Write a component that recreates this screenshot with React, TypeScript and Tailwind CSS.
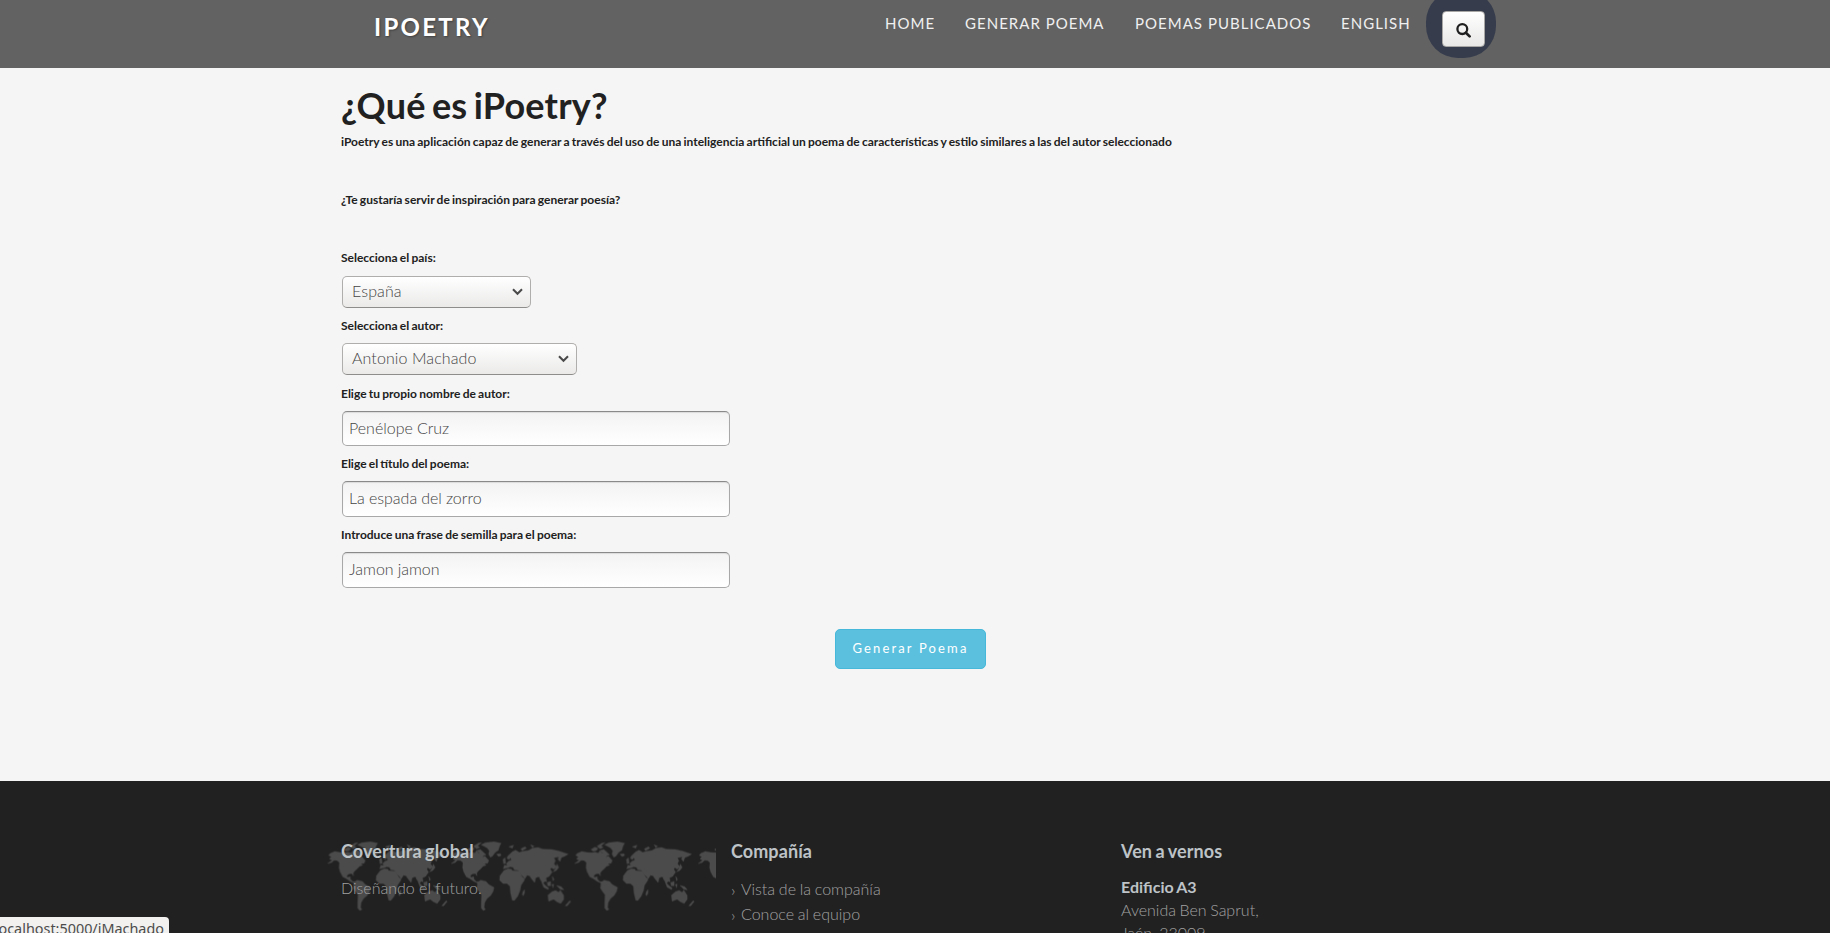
import React from "react";

const navItems = [
  { label: "HOME", width: "w-[80px]" },
  { label: "GENERAR POEMA", width: "w-[170px]" },
  { label: "POEMAS PUBLICADOS", width: "w-[206px]" },
  { label: "ENGLISH", width: "w-[85px]" },
];

function Header() {
  return (
    <header className="flex h-[68px] items-start overflow-hidden bg-[#626262]">
      <a className="ml-[374px] mt-[12px] w-[511px] text-[24px] font-bold leading-[30px] tracking-[2.3px] text-white [text-shadow:1px_1px_2px_rgba(0,0,0,0.35)]">
        IPOETRY
      </a>
      <nav className="flex pt-[13px] text-[15px] leading-[20px] tracking-[1.02px] text-[#f0f0f0]">
        {navItems.map((item) => (
          <a key={item.label} className={`${item.width} whitespace-nowrap`}>
            {item.label}
          </a>
        ))}
      </nav>
      <div className="-mt-[10px] flex h-[68px] w-[70px] items-center justify-center rounded-[32px] bg-[#363c4c] pl-[4px] pt-[10px]">
        <button className="flex h-[36px] w-[43px] items-center justify-center rounded-[4px] border border-[#a9a7a5] bg-linear-to-b from-white to-[#e9e8e7]">
          <svg viewBox="0 0 15 15" className="mt-[2px] h-[15px] w-[15px]" fill="none" stroke="#202020">
            <circle cx="6.3" cy="6.1" r="4.9" strokeWidth="2.3" />
            <path d="M9.9 9.8 L13.6 13.4" strokeWidth="2.7" strokeLinecap="round" />
          </svg>
        </button>
      </div>
    </header>
  );
}

function Label({ children }: { children: React.ReactNode }) {
  return (
    <h6 className="h-[20px] whitespace-nowrap text-[12px] font-bold leading-[20px] text-[#212121] [word-spacing:-0.7px]">
      {children}
    </h6>
  );
}

function SelectBox({ value, width }: { value: string; width: string }) {
  return (
    <div
      className={`${width} ml-px flex h-[32px] items-center justify-between rounded-[5px] border border-[#b0aeac] border-b-[#8f8d8b] bg-linear-to-b from-white to-[#ebeae9] pl-[9px] pr-[7px] text-[16px] font-light tracking-[0.1px] text-[#444]`}
    >
      <span className="pb-[2px]">{value}</span>
      <svg viewBox="0 0 11 8" className="h-[8px] w-[11px]" fill="none" stroke="#4a4a4a" strokeWidth="2">
        <path d="M1 1.2 L5.5 5.8 L10 1.2" />
      </svg>
    </div>
  );
}

function TextBox({ value, height = "h-[36px]" }: { value: string; height?: string }) {
  return (
    <input
      readOnly
      value={value}
      className={`${height} ml-px block w-[388px] rounded-[5px] border border-[#a8a8a8] border-t-[#8a8a8a] bg-linear-to-b from-[#f3f3f3] to-white px-[6px] pb-[3px] text-[16px] font-light text-[#444] outline-none [box-shadow:inset_0_1px_1px_rgba(0,0,0,0.1)] [word-spacing:-0.3px]`}
    />
  );
}

function WorldMap() {
  return (
    <svg width="390" height="72" className="absolute -left-[15px] top-[1px]">
      <defs>
        <pattern id="world" width="123.5" height="72" patternUnits="userSpaceOnUse" x="1.5" y="1.5">
          <g transform="scale(0.3333)" fill="#4b4b4b" stroke="#4b4b4b" strokeWidth="1">
            <path d="M1 66 L9 60 L14 57 L6 52 L12 46 L4 42 L8 36 L22 30 L38 33 L52 34 L62 32 L72 35 L76 28 L84 36 L90 34 L98 41 L94 47 L102 44 L113 57 L110 65 L100 66 L105 71 L96 74 L89 82 L80 90 L77 95 L78 103 L73 96 L65 97 L58 102 L59 108 L68 106 L69 113 L76 121 L85 121 L81 125 L68 119 L56 111 L46 106 L38 91 L35 79 L36 63 L29 57 L20 56 L12 63 Z" />
            <path d="M50 24 L61 17 L70 20 L66 27 L56 29 Z M68 14 L82 5 L91 4 L80 13 L86 18 L77 22 Z M77 27 L88 24 L105 40 L96 42 L83 33 Z" />
            <path d="M91 10 L103 4 L129 1 L150 5 L145 15 L142 26 L132 33 L124 44 L118 47 L113 38 L115 28 L108 19 Z M137 38 L148 37 L150 42 L143 45 Z" />
            <path d="M80 123 L89 116 L105 120 L113 129 L129 138 L126 150 L119 162 L108 171 L101 183 L99 198 L103 204 L97 207 L91 200 L91 183 L92 160 L85 151 L78 140 Z" />
            <path d="M159 87 L171 82 L181 83 L184 88 L204 89 L211 102 L215 109 L221 110 L219 118 L210 131 L207 147 L200 164 L190 177 L184 176 L179 155 L177 134 L168 126 L156 126 L146 116 L147 103 Z M221 145 L220 156 L216 163 L214 159 L216 150 Z" />
            <path d="M157 82 L160 71 L169 73 L166 66 L173 59 L181 56 L179 48 L174 54 L168 51 L170 44 L184 31 L194 26 L205 33 L214 30 L233 27 L244 20 L261 18 L275 23 L302 24 L325 29 L351 38 L341 44 L331 48 L327 60 L321 53 L324 46 L309 49 L313 58 L309 67 L316 76 L308 83 L301 78 L298 83 L303 92 L294 105 L285 109 L287 121 L281 119 L276 126 L268 114 L264 105 L254 109 L251 123 L241 111 L236 103 L228 101 L222 111 L210 99 L201 86 L190 85 L186 77 L178 76 L170 79 Z" />
            <path d="M156 54 L162 49 L164 65 L158 67 Z M210 22 L222 16 L226 20 L213 28 Z M239 10 L249 14 L244 18 Z M174 16 L187 11 L184 20 Z M318 68 L323 78 L316 87 L307 91 L313 82 Z" />
            <path d="M272 121 L284 133 L293 140 L291 144 L278 137 Z M289 123 L299 120 L299 133 L290 133 Z M303 129 L308 128 L306 139 Z M317 132 L331 136 L338 145 L328 143 Z M304 105 L309 114 L306 118 Z" />
            <path d="M291 161 L303 151 L314 147 L323 153 L328 146 L338 162 L338 174 L329 186 L318 181 L308 173 L293 179 Z M343 193 L356 178 L359 180 L349 193 Z" />
          </g>
        </pattern>
      </defs>
      <rect width="390" height="72" fill="url(#world)" />
    </svg>
  );
}

function FooterTitle({ children }: { children: React.ReactNode }) {
  return (
    <h4 className="relative text-[18px] font-bold leading-[24px] tracking-[0.08px] text-[#bdc3c7] [word-spacing:-1px]">
      {children}
    </h4>
  );
}

function Footer() {
  return (
    <footer className="flex h-[152px] overflow-hidden bg-[#212121] pl-[341px] pt-[58px] text-[16px] font-light text-[#a2a2a2]">
      <section className="relative w-[390px]">
        <WorldMap />
        <FooterTitle>Covertura global</FooterTitle>
        <p className="relative mt-[13px] leading-[24px]">Diseñando el futuro.</p>
      </section>
      <section className="w-[390px]">
        <FooterTitle>Compañía</FooterTitle>
        <ul className="mt-[13px] leading-[25px] [word-spacing:-0.6px]">
          <li className="flex"><span className="w-[10px] pt-px">›</span>Vista de la compañía</li>
          <li className="-mt-px flex"><span className="w-[10px] pt-px">›</span>Conoce al equipo</li>
        </ul>
      </section>
      <section>
        <FooterTitle>Ven a vernos</FooterTitle>
        <address className="mt-[12px] not-italic leading-[23px] [word-spacing:-0.8px]">
          <strong className="font-bold text-[#bdc3c7]">Edificio A3</strong>
          <br />
          Avenida Ben Saprut,
          <br />
          Jaén, 23009
        </address>
      </section>
    </footer>
  );
}

export default function App() {
  return (
    <div className="relative h-[933px] w-full overflow-hidden bg-[#f5f5f5] font-['Lato',sans-serif]">
      <Header />
      <main className="flex h-[713px] flex-col pl-[341px]">
        <h1 className="mt-[15px] h-[49px] text-[36px] font-bold leading-[44px] tracking-[0.2px] text-[#212121] [word-spacing:-2.6px]">¿Qué es iPoetry?</h1>
        <Label>iPoetry es una aplicación capaz de generar a través del uso de una inteligencia artificial un poema de características y estilo similares a las del autor seleccionado</Label>
        <div className="mt-[38px]"><Label>¿Te gustaría servir de inspiración para generar poesía?</Label></div>
        <form className="mt-[38px] flex flex-col">
          <Label>Selecciona el país:</Label>
          <div className="mb-[8px] mt-[8px]"><SelectBox value="España" width="w-[189px]" /></div>
          <Label>Selecciona el autor:</Label>
          <div className="mb-[9px] mt-[7px]"><SelectBox value="Antonio Machado" width="w-[235px]" /></div>
          <Label>Elige tu propio nombre de autor:</Label>
          <div className="mb-[8px] mt-[7px]"><TextBox value="Penélope Cruz" height="h-[35px]" /></div>
          <Label>Elige el título del poema:</Label>
          <div className="mb-[8px] mt-[7px]"><TextBox value="La espada del zorro" /></div>
          <Label>Introduce una frase de semilla para el poema:</Label>
          <div className="mt-[7px]"><TextBox value="Jamon jamon" /></div>
          <button type="button" className="ml-[494px] mt-[41px] h-[40px] w-[151px] rounded-[5px] border border-[#46b8da] bg-[#5bc0de] text-[13px] tracking-[2.15px] text-white">
            Generar Poema
          </button>
        </form>
      </main>
      <Footer />
      <div className="absolute bottom-0 left-0 flex h-[16px] w-[169px] justify-end overflow-hidden rounded-tr-[4px] bg-[#f2f1f0] pr-[5px] font-['Noto_Sans',sans-serif] text-[14.4px] leading-[23px] text-[#4c4c4c]">
        <span className="whitespace-nowrap">localhost:5000/iMachado</span>
      </div>
    </div>
  );
}
